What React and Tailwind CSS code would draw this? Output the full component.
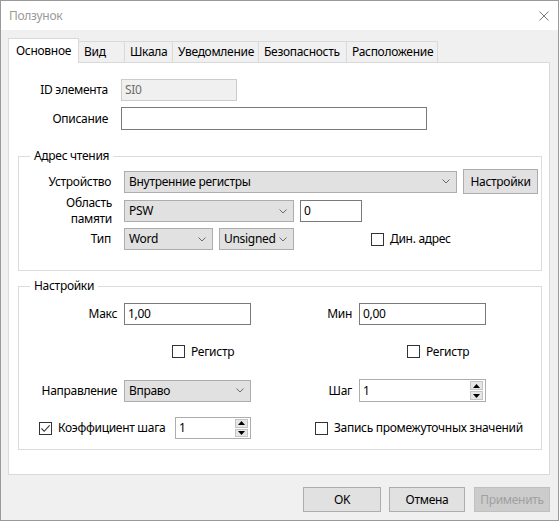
import React from "react";

/* ------------------ Small controls ------------------ */
function Chevron() {
  return (
    <svg width="8" height="5" viewBox="0 0 8 5" className="shrink-0">
      <path d="M0.5 0.5 L4 4 L7.5 0.5" fill="none" stroke="#6b6b6b" strokeWidth="1" />
    </svg>
  );
}

function Select({ value, className = "" }) {
  return (
    <div
      className={`flex h-[22px] items-center justify-between border border-[#adadad] bg-[#e1e1e1] pl-[4px] pr-[6px] ${className}`}
    >
      <span>{value}</span>
      <Chevron />
    </div>
  );
}

function TextBox({ value = "", className = "" }) {
  return (
    <div className={`flex h-[22px] items-center border border-[#7a7a7a] bg-white pl-[3px] ${className}`}>
      {value}
    </div>
  );
}

function Check({ checked, label, className = "" }) {
  return (
    <div className={`flex items-center gap-[6px] ${className}`}>
      <span className="flex h-[13px] w-[13px] shrink-0 items-center justify-center border border-[#333] bg-white">
        {checked && (
          <svg width="11" height="11" viewBox="0 0 11 11">
            <path d="M1.5 5.5 L4.2 8.3 L9.6 2.3" fill="none" stroke="#333" strokeWidth="1.1" />
          </svg>
        )}
      </span>
      <span>{label}</span>
    </div>
  );
}

function Spin({ value, className = "" }) {
  return (
    <div className={`flex items-stretch border border-[#adadad] bg-white ${className}`}>
      <span className="flex flex-1 items-center pl-[3px]">{value}</span>
      <div className="my-[1px] mr-[2px] flex w-[13px] flex-col gap-[1px]">
        <div className="flex flex-1 items-center justify-center border border-[#c4c4c4] bg-[#e6e6e6]">
          <svg width="7" height="4" viewBox="0 0 7 4">
            <path d="M0 4 L3.5 0 L7 4 Z" fill="#000" />
          </svg>
        </div>
        <div className="flex flex-1 items-center justify-center border border-[#c4c4c4] bg-[#e6e6e6]">
          <svg width="7" height="4" viewBox="0 0 7 4">
            <path d="M0 0 L7 0 L3.5 4 Z" fill="#000" />
          </svg>
        </div>
      </div>
    </div>
  );
}

function Button({ children, disabled, className = "" }) {
  return (
    <div
      className={`flex h-[25px] items-center justify-center border ${
        disabled
          ? "border-[#bfbfbf] bg-[#cccccc] text-[#a0a0a0]"
          : "border-[#adadad] bg-[#e1e1e1] text-black"
      } ${className}`}
    >
      {children}
    </div>
  );
}

const tabs = [
  { name: "Вид", w: "w-[46px]" },
  { name: "Шкала", w: "w-[48px]" },
  { name: "Уведомление", w: "w-[86px]" },
  { name: "Безопасность", w: "w-[88px]" },
  { name: "Расположение", w: "w-[91px]" },
];

/* ------------------ Dialog ------------------ */
export default function App() {
  return (
    <div className="flex h-[521px] w-[559px] flex-col border border-[#999] bg-[#f0f0f0] font-['Noto_Sans',sans-serif] text-[12px] leading-[16px] tracking-[-0.3px] text-black">
      {/* title bar */}
      <div className="flex h-[29px] shrink-0 items-center justify-between bg-white pl-[8px] pr-[9px] text-[#999]">
        <span>Ползунок</span>
        <svg width="10" height="10" viewBox="0 0 10 10">
          <path d="M0.5 0.5 L9.5 9.5 M9.5 0.5 L0.5 9.5" stroke="#777" strokeWidth="1" />
        </svg>
      </div>

      {/* tabs */}
      <div className="ml-[7px] mt-[8px] flex h-[24px] items-end">
        <div className="relative z-10 -mb-px flex h-[25px] w-[71px] items-center border border-b-0 border-[#d9d9d9] bg-white pl-[7px]">
          Основное
        </div>
        {tabs.map((t) => (
          <div
            key={t.name}
            className={`flex h-[21px] items-center border-r border-t border-[#d9d9d9] bg-[#f0f0f0] pl-[5px] ${t.w}`}
          >
            {t.name}
          </div>
        ))}
      </div>

      {/* page */}
      <div className="ml-[7px] h-[413px] w-[542px] shrink-0 border border-[#d9d9d9] bg-white">
        <div className="mt-[16px] flex items-center">
          <span className="w-[99px] text-right">ID элемента</span>
          <div className="ml-[13px] flex h-[22px] w-[116px] items-center border border-[#cccccc] bg-[#f0f0f0] pl-[3px] text-[#6d6d6d]">
            SI0
          </div>
        </div>
        <div className="mt-[6px] flex items-center">
          <span className="w-[99px] text-right">Описание</span>
          <TextBox className="ml-[13px] h-[23px] w-[306px]" />
        </div>

        {/* read address */}
        <fieldset className="ml-[9px] mt-[18px] w-[524px] border border-[#dcdcdc] pb-[20px]">
          <legend className="ml-[11px] px-[4px] leading-[16px]">Адрес чтения</legend>
          <div className="mt-[5px] flex items-center">
            <span className="w-[92px] text-right">Устройство</span>
            <Select value="Внутренние регистры" className="ml-[13px] w-[333px]" />
            <Button className="ml-[6px] h-[22px] w-[75px]">Настройки</Button>
          </div>
          <div className="mt-[6px] flex h-[22px] items-center">
            <span className="-my-[5px] w-[93px] text-right leading-[16px]">
              Область
              <br />
              памяти
            </span>
            <Select value="PSW" className="ml-[12px] w-[170px]" />
            <TextBox value="0" className="ml-[6px] w-[62px]" />
          </div>
          <div className="mt-[6px] flex items-center">
            <span className="w-[92px] text-right">Тип</span>
            <Select value="Word" className="ml-[13px] w-[89px]" />
            <Select value="Unsigned" className="ml-[6px] w-[75px]" />
            <Check label="Дин. адрес" className="ml-[77px]" />
          </div>
        </fieldset>

        {/* settings */}
        <fieldset className="ml-[9px] mt-[7px] w-[524px] border border-[#dcdcdc] pb-[10px]">
          <legend className="ml-[11px] px-[4px] leading-[16px]">Настройки</legend>
          <div className="mt-[9px] flex items-center">
            <span className="w-[98px] text-right">Макс</span>
            <TextBox value="1,00" className="ml-[7px] w-[127px]" />
            <span className="w-[101px] text-right">Мин</span>
            <TextBox value="0,00" className="ml-[7px] w-[127px]" />
          </div>
          <div className="mt-[20px] flex h-[13px] items-center pl-[153px]">
            <Check label="Регистр" className="w-[235px]" />
            <Check label="Регистр" />
          </div>
          <div className="mt-[21px] flex items-center">
            <span className="w-[98px] text-right">Направление</span>
            <Select value="Вправо" className="ml-[7px] w-[127px]" />
            <span className="w-[101px] text-right">Шаг</span>
            <Spin value="1" className="ml-[7px] h-[23px] w-[127px]" />
          </div>
          <div className="mt-[15px] flex items-center pl-[20px]">
            <Check checked label="Коэффициент шага" className="w-[136px]" />
            <Spin value="1" className="h-[22px] w-[76px]" />
            <Check label="Запись промежуточных значений" className="ml-[64px]" />
          </div>
        </fieldset>
      </div>

      {/* dialog buttons */}
      <div className="ml-[302px] mt-[12px] flex">
        <Button className="w-[78px]">OK</Button>
        <Button className="ml-[8px] w-[76px]">Отмена</Button>
        <Button disabled className="ml-[9px] w-[76px]">
          Применить
        </Button>
      </div>
    </div>
  );
}
